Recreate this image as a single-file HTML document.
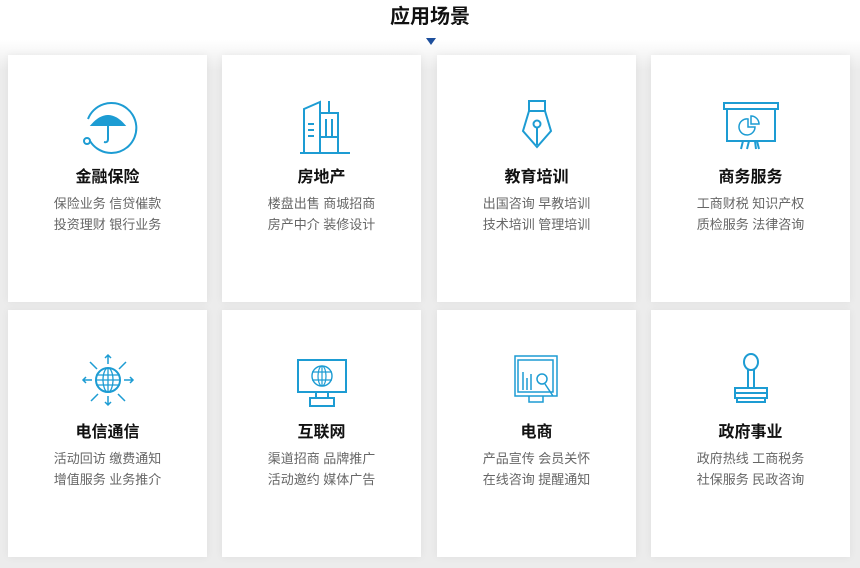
<!DOCTYPE html>
<html><head><meta charset="utf-8"><style>
body{margin:0;width:860px;height:568px;background:#fff;font-family:"Liberation Sans","Noto Sans CJK SC",sans-serif;position:relative;overflow:hidden}
h1{position:absolute;top:3px;left:0;width:860px;text-align:center;margin:0;font-size:20px;font-weight:bold;color:#111;line-height:28px}
.tri{position:absolute;left:426px;top:38px;width:0;height:0;border-left:5px solid transparent;border-right:5px solid transparent;border-top:7px solid #1d4f9c}
.bg{position:absolute;left:0;top:40px;width:860px;height:528px;background:linear-gradient(#fff 0px,#ececec 30px,#ececec)}
.card{position:absolute;width:199px;height:247px;background:#fff;text-align:center;box-shadow:0 0 8px rgba(0,0,0,.06)}
.card svg{position:absolute;left:70px;top:42px}
.card .t{position:absolute;top:108px;width:100%;font-size:16px;font-weight:bold;color:#111}
.card .d{position:absolute;top:138px;width:100%;font-size:13px;color:#666;line-height:21px}
svg *{fill:none;stroke:#1d9cd3;stroke-width:2}
</style></head><body>
<div class="bg"></div>
<h1>应用场景</h1><div class="tri"></div>

<div class="card" style="left:8px;top:55px">
<svg width="60" height="60" viewBox="0 0 60 60"><path d="M12 44 A25 25 0 1 0 10 22"/><circle cx="9" cy="44" r="3"/><path d="M14 28 Q30 10 46 28 Z" style="fill:#1d9cd3"/><path d="M30 18 V42 Q30 46 26 45"/></svg>
<div class="t">金融保险</div><div class="d">保险业务 信贷催款<br>投资理财 银行业务</div></div>

<div class="card" style="left:222px;top:55px">
<svg width="60" height="60" viewBox="0 0 60 60"><path d="M8 56 H58 M12 56 V12 L28 5 V56 M28 16 H46 V56 M37 4 V16 M34 22 V40 M40 22 V40 M28 40 H46 M16 27 H22 M16 33 H22 M16 39 H22"/></svg>
<div class="t">房地产</div><div class="d">楼盘出售 商城招商<br>房产中介 装修设计</div></div>

<div class="card" style="left:437px;top:55px">
<svg width="60" height="60" viewBox="0 0 60 60"><path d="M22 4 H38 V14 H22 Z M22 14 L16 34 L30 50 L44 34 L38 14"/><circle cx="30" cy="27" r="3.5"/><path d="M30 31 V48"/></svg>
<div class="t">教育培训</div><div class="d">出国咨询 早教培训<br>技术培训 管理培训</div></div>

<div class="card" style="left:651px;top:55px">
<svg width="60" height="60" viewBox="0 0 60 60"><path d="M3 6 H57 V12 H3 Z M6 12 V44 H54 V12 M22 44 L20 52 M36 44 L38 52 M28 44 L26 52 M34 44 L35 52"/><path d="M27 22 A8 8 0 1 0 34 30 H27 Z M30 19 A8 8 0 0 1 38 27 H30 Z" style="stroke-width:1.5"/></svg>
<div class="t">商务服务</div><div class="d">工商财税 知识产权<br>质检服务 法律咨询</div></div>

<div class="card" style="left:8px;top:310px">
<svg width="60" height="60" viewBox="0 0 60 60"><circle cx="30" cy="28" r="12"/><ellipse cx="30" cy="28" rx="5" ry="12" style="stroke-width:1.3"/><path d="M18 23 H42 M18 33 H42 M30 16 V40 M18 28 H42" style="stroke-width:1.3"/><path d="M30 12 V3 M27 6 L30 3 L33 6 M30 44 V53 M27 50 L30 53 L33 50 M14 28 H5 M8 25 L5 28 L8 31 M46 28 H55 M52 25 L55 28 L52 31 M19 17 L12 10 M20 42 L13 49 M41 17 L48 10 M40 42 L47 49" style="stroke-width:1.5"/></svg>
<div class="t">电信通信</div><div class="d">活动回访 缴费通知<br>增值服务 业务推介</div></div>

<div class="card" style="left:222px;top:310px">
<svg width="60" height="60" viewBox="0 0 60 60"><path d="M6 8 H54 V40 H6 Z M24 40 V46 H36 V40 M18 46 H42 V54 H18 Z"/><circle cx="30" cy="24" r="10" style="stroke-width:1.4"/><ellipse cx="30" cy="24" rx="4" ry="10" style="stroke-width:1.2"/><path d="M20 20 H40 M20 28 H40 M30 14 V34" style="stroke-width:1.2"/></svg>
<div class="t">互联网</div><div class="d">渠道招商 品牌推广<br>活动邀约 媒体广告</div></div>

<div class="card" style="left:437px;top:310px">
<svg width="60" height="60" viewBox="0 0 60 60"><path d="M8 4 H50 V44 H8 Z M11 8 H46 V40 H11 Z M22 44 V50 H36 V44 M16 20 V38 M20 26 V38 M24 22 V38 M38 32 L46 44" style="stroke-width:1.5"/><circle cx="35" cy="27" r="5" style="stroke-width:1.5"/></svg>
<div class="t">电商</div><div class="d">产品宣传 会员关怀<br>在线咨询 提醒通知</div></div>

<div class="card" style="left:651px;top:310px">
<svg width="60" height="60" viewBox="0 0 60 60"><ellipse cx="30" cy="10" rx="7" ry="8"/><path d="M27 17 V36 M33 17 V36 M14 36 H46 V46 H14 Z M14 41 H46 M16 46 V50 H44 V46"/></svg>
<div class="t">政府事业</div><div class="d">政府热线 工商税务<br>社保服务 民政咨询</div></div>
</body></html>
